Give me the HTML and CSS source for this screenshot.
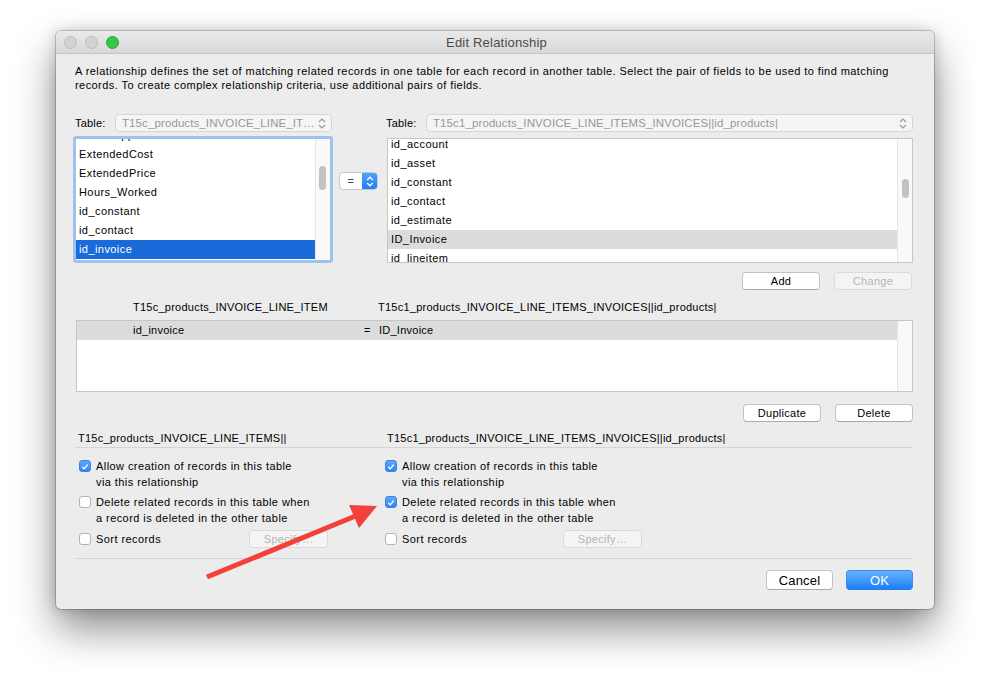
FILE: index.html
```html
<!DOCTYPE html>
<html lang="en">
<head>
  <meta charset="UTF-8" />
  <title>Edit Relationship</title>
  <link rel="stylesheet" href="styles.css">
</head>
<body>

<div class="window">
  <div class="titlebar">
    <div class="lights">
      <span class="light"></span>
      <span class="light"></span>
      <span class="light green"></span>
    </div>
    <div class="title">Edit Relationship</div>
  </div>

  <div class="content">
    <p class="desc">A relationship defines the set of matching related records in one table for each record in another table. Select the pair of fields to be used to find matching<br>records. To create complex relationship criteria, use additional pairs of fields.</p>

    <div class="pickers">
      <!-- left table -->
      <div class="side side-left">
        <div class="table-row">
          <span class="lbl">Table:</span>
          <div class="popup popup-left">
            <span class="popup-text">T15c_products_INVOICE_LINE_IT…</span>
            <svg class="chev" width="8" height="11" viewBox="0 0 8 11"><path d="M1 4 L4 1 L7 4 M1 7 L4 10 L7 7" fill="none" stroke="#9a9a9a" stroke-width="1.2"/></svg>
          </div>
        </div>
        <div class="list list-focus">
          <div class="rows rows-left">
            <div class="row">DateShipped</div>
            <div class="row">ExtendedCost</div>
            <div class="row">ExtendedPrice</div>
            <div class="row">Hours_Worked</div>
            <div class="row">id_constant</div>
            <div class="row">id_contact</div>
            <div class="row row-sel">id_invoice</div>
          </div>
          <div class="track track-left"><div class="thumb thumb-left"></div></div>
        </div>
      </div>

      <!-- operator -->
      <div class="op">
        <div class="op-popup">
          <span class="op-val">=</span>
          <span class="op-arrows">
            <svg width="8" height="11" viewBox="0 0 8 11"><path d="M1.2 4 L4 1.2 L6.8 4 M1.2 7 L4 9.8 L6.8 7" fill="none" stroke="#fff" stroke-width="1.3"/></svg>
          </span>
        </div>
      </div>

      <!-- right table -->
      <div class="side side-right">
        <div class="table-row">
          <span class="lbl">Table:</span>
          <div class="popup popup-right">
            <span class="popup-text">T15c1_products_INVOICE_LINE_ITEMS_INVOICES||id_products|</span>
            <svg class="chev" width="8" height="11" viewBox="0 0 8 11"><path d="M1 4 L4 1 L7 4 M1 7 L4 10 L7 7" fill="none" stroke="#9a9a9a" stroke-width="1.2"/></svg>
          </div>
        </div>
        <div class="list list-plain">
          <div class="rows rows-right">
            <div class="row">id_account</div>
            <div class="row">id_asset</div>
            <div class="row">id_constant</div>
            <div class="row">id_contact</div>
            <div class="row">id_estimate</div>
            <div class="row row-grey">ID_Invoice</div>
            <div class="row">id_lineitem</div>
          </div>
          <div class="track track-right"><div class="thumb thumb-right"></div></div>
        </div>
      </div>
    </div>

    <div class="btn-row btn-row-add">
      <button class="btn">Add</button>
      <button class="btn" disabled>Change</button>
    </div>

    <div class="pair-head">
      <span class="ph-left">T15c_products_INVOICE_LINE_ITEM</span>
      <span>T15c1_products_INVOICE_LINE_ITEMS_INVOICES||id_products|</span>
    </div>

    <div class="pairs">
      <div class="pair-rows">
        <div class="pair pair-sel">
          <span class="pair-l">id_invoice</span>
          <span class="pair-eq">=</span>
          <span>ID_Invoice</span>
        </div>
      </div>
      <div class="track track-pairs"></div>
    </div>

    <div class="btn-row btn-row-dup">
      <button class="btn">Duplicate</button>
      <button class="btn">Delete</button>
    </div>

    <div class="opts-head">
      <span class="oh-left">T15c_products_INVOICE_LINE_ITEMS||</span>
      <span class="oh-right">T15c1_products_INVOICE_LINE_ITEMS_INVOICES||id_products|</span>
    </div>

    <div class="opts">
      <div class="opt-col opt-col-left">
        <div class="opt">
          <span class="cb cb-on"><svg width="12" height="12" viewBox="0 0 12 12"><path d="M3.2 6.3 L5.1 8.3 L8.8 3.6" fill="none" stroke="#fff" stroke-width="1.6" stroke-linecap="round" stroke-linejoin="round"/></svg></span>
          <span class="opt-text">Allow creation of records in this table<br>via this relationship</span>
        </div>
        <div class="opt">
          <span class="cb"></span>
          <span class="opt-text">Delete related records in this table when<br>a record is deleted in the other table</span>
        </div>
        <div class="opt opt-sort">
          <span class="cb"></span>
          <span class="opt-text sort-text">Sort records</span>
          <button class="btn btn-specify" disabled>Specify…</button>
        </div>
      </div>
      <div class="opt-col opt-col-right">
        <div class="opt">
          <span class="cb cb-on"><svg width="12" height="12" viewBox="0 0 12 12"><path d="M3.2 6.3 L5.1 8.3 L8.8 3.6" fill="none" stroke="#fff" stroke-width="1.6" stroke-linecap="round" stroke-linejoin="round"/></svg></span>
          <span class="opt-text">Allow creation of records in this table<br>via this relationship</span>
        </div>
        <div class="opt">
          <span class="cb cb-on"><svg width="12" height="12" viewBox="0 0 12 12"><path d="M3.2 6.3 L5.1 8.3 L8.8 3.6" fill="none" stroke="#fff" stroke-width="1.6" stroke-linecap="round" stroke-linejoin="round"/></svg></span>
          <span class="opt-text">Delete related records in this table when<br>a record is deleted in the other table</span>
        </div>
        <div class="opt opt-sort">
          <span class="cb"></span>
          <span class="opt-text sort-text">Sort records</span>
          <button class="btn btn-specify specify-right" disabled>Specify…</button>
        </div>
      </div>
    </div>

    <div class="footer">
      <button class="btn btn-big">Cancel</button>
      <button class="btn btn-big btn-ok">OK</button>
    </div>
  </div>
</div>

<!-- annotation arrow -->
<svg class="arrow" width="990" height="690" viewBox="0 0 990 690">
  <line x1="207" y1="577" x2="358" y2="515" stroke="#f4403b" stroke-width="5"/>
  <polygon points="377,506 349,505 359,528" fill="#f4403b"/>
</svg>

</body>
</html>
```

FILE: styles.css
```css
body {
  margin: 0;
  padding: 31px 0 0 56px;
  height: 690px;
  box-sizing: border-box;
  overflow: hidden;
  background: #fff;
  font-family: "Liberation Sans", Arial, sans-serif;
  font-size: 11px;
  letter-spacing: 0.43px;
  color: #000;
}

.window {
  width: 878px;
  height: 578px;
  background: #ececec;
  border-radius: 5px;
  box-shadow: 0 0 0 1px rgba(0,0,0,0.18), 0 0 14px rgba(0,0,0,0.18), 0 20px 42px rgba(0,0,0,0.45);
  overflow: hidden;
}

/* title bar */
.titlebar {
  height: 22px;
  background: linear-gradient(#e9e9e9, #d8d8d8);
  border-bottom: 1px solid #c4c4c4;
  display: flex;
  align-items: center;
}
.lights { display: flex; gap: 8px; padding-left: 8px; }
.light {
  width: 11px; height: 11px; border-radius: 50%;
  background: #d3d3d3; border: 0.5px solid #bdbdbd;
}
.light.green { background: #35c64a; border-color: #27a937; }
.title {
  flex: 1;
  text-align: center;
  font-size: 13px;
  letter-spacing: 0.2px;
  color: #4b4b4b;
  margin-left: -60px;
}

.content { padding: 0 21px 0 19px; }

.desc {
  margin: 10px 0 0;
  line-height: 14px;
  white-space: nowrap;
}

/* table pickers */
.pickers { display: flex; margin-top: 22px; height: 149px; }
.side-left { width: 258px; }
.op { width: 53px; }
.side-right { flex: 1; }

.table-row { display: flex; align-items: center; height: 18px; }
.lbl { width: 40px; letter-spacing: 0.2px; }
.popup {
  height: 16px;
  border: 1px solid #d6d6d6;
  border-radius: 4px;
  background: #f5f5f5;
  color: #989898;
  display: flex;
  align-items: center;
  padding: 0 5px 0 6px;
  font-size: 11.5px;
  letter-spacing: 0.1px;
}
.popup-left { width: 204px; }
.popup-right { flex: 1; }
.popup-text { flex: 1; white-space: nowrap; overflow: hidden; }

.list {
  background: #fff;
  position: relative;
  overflow: hidden;
  display: flex;
}
.list-focus {
  margin: 4px 0 0 -2px;
  width: 254px;
  height: 121px;
  border: 3px solid #9dc2f0;
  border-radius: 3px;
}
.list-plain {
  margin: 6px 0 0 1px;
  height: 123px;
  border: 1px solid #c6c6c6;
}
.rows { flex: 1; }
.rows-left { margin-top: -13px; }
.rows-right { margin-top: -4px; }
.row {
  height: 19px;
  line-height: 19px;
  padding-left: 3px;
  white-space: nowrap;
}
.row-sel { background: #186bd8; color: #fff; }
.row-grey { background: #dcdcdc; }

.track {
  width: 14px;
  background: #f9f9f9;
  border-left: 1px solid #e6e6e6;
  position: relative;
}
.thumb {
  position: absolute;
  left: 3px;
  width: 7px;
  border-radius: 4px;
  background: #c2c2c2;
}
.thumb-left { top: 27px; height: 24px; }
.thumb-right { top: 40px; height: 19px; left: 4px; }

/* operator popup */
.op-popup {
  margin: 58px 0 0 6px;
  width: 37px;
  height: 16px;
  border: 1px solid #c8c8c8;
  border-radius: 4px;
  background: #fff;
  display: flex;
  overflow: hidden;
}
.op-val { flex: 1; text-align: center; line-height: 16px; color: #444; }
.op-arrows {
  width: 15px;
  background: linear-gradient(#4ea2fa, #1f7ff5);
  display: flex;
  align-items: center;
  justify-content: center;
}

/* buttons */
.btn-row { display: flex; justify-content: flex-end; gap: 14px; }
.btn-row-add { margin-top: 9px; padding-right: 1px; }
.btn-row-dup { margin-top: 12px; }
.btn {
  font-family: "Liberation Sans", Arial, sans-serif;
  font-size: 11px;
  letter-spacing: 0.3px;
  height: 18px;
  width: 78px;
  padding: 0;
  background: #fff;
  border: 1px solid #c3c3c3;
  border-bottom-color: #a9a9a9;
  border-radius: 4px;
  color: #000;
}
.btn:disabled {
  background: #f4f4f4;
  border-color: #dadada;
  color: #b4b4b4;
}

/* pair list */
.pair-head {
  margin-top: 10px;
  line-height: 14px;
  padding-left: 58px;
  display: flex;
  letter-spacing: 0.25px;
}
.ph-left { width: 245px; }

.pairs {
  margin: 6px 0 0 1px;
  height: 70px;
  border: 1px solid #c6c6c6;
  background: #fff;
  display: flex;
}
.pair-rows { flex: 1; }
.pair {
  height: 19px;
  line-height: 19px;
  display: flex;
  padding-left: 56px;
  letter-spacing: 0.25px;
}
.pair-sel { background: #dcdcdc; }
.pair-l { width: 231px; }
.pair-eq { width: 15px; }

/* options */
.opts-head {
  margin-top: 9px;
  line-height: 14px;
  padding-bottom: 2px;
  border-bottom: 1px solid #d4d4d4;
  display: flex;
  letter-spacing: 0.25px;
}
.oh-left { width: 309px; padding-left: 3px; }

.opts {
  display: flex;
  padding: 10px 0 10px;
  border-bottom: 1px solid #d4d4d4;
}
.opt-col-left { width: 306px; padding-left: 4px; }
.opt-col-right { flex: 1; }
.opt {
  display: flex;
  align-items: flex-start;
  line-height: 16px;
  margin-bottom: 4px;
}
.opt-sort { margin-top: 2px; margin-bottom: 0; align-items: center; }
.cb {
  width: 12px;
  height: 12px;
  box-sizing: border-box;
  margin-top: 2px;
  margin-right: 5px;
  border: 1px solid #b3b3b3;
  border-radius: 3px;
  background: #fff;
  flex-shrink: 0;
  display: flex;
}
.opt-sort .cb { margin-top: 0; }
.cb-on { background: linear-gradient(#5eaaf9, #2b86f5); border-color: #3484ea; }
.sort-text { width: 153px; }
.btn-specify { width: 79px; }
.specify-right { margin-left: 8px; }

.footer {
  display: flex;
  justify-content: flex-end;
  gap: 13px;
  margin-top: 11px;
}
.btn-big { height: 20px; width: 67px; font-size: 13px; letter-spacing: 0.2px; }
.btn-ok {
  background: linear-gradient(#68b1fb, #1b80fa);
  border-color: #3d8ef2;
  border-bottom-color: #2a78e0;
  color: #fff;
}

.arrow {
  position: absolute;
  left: 0;
  top: 0;
  pointer-events: none;
}
```
